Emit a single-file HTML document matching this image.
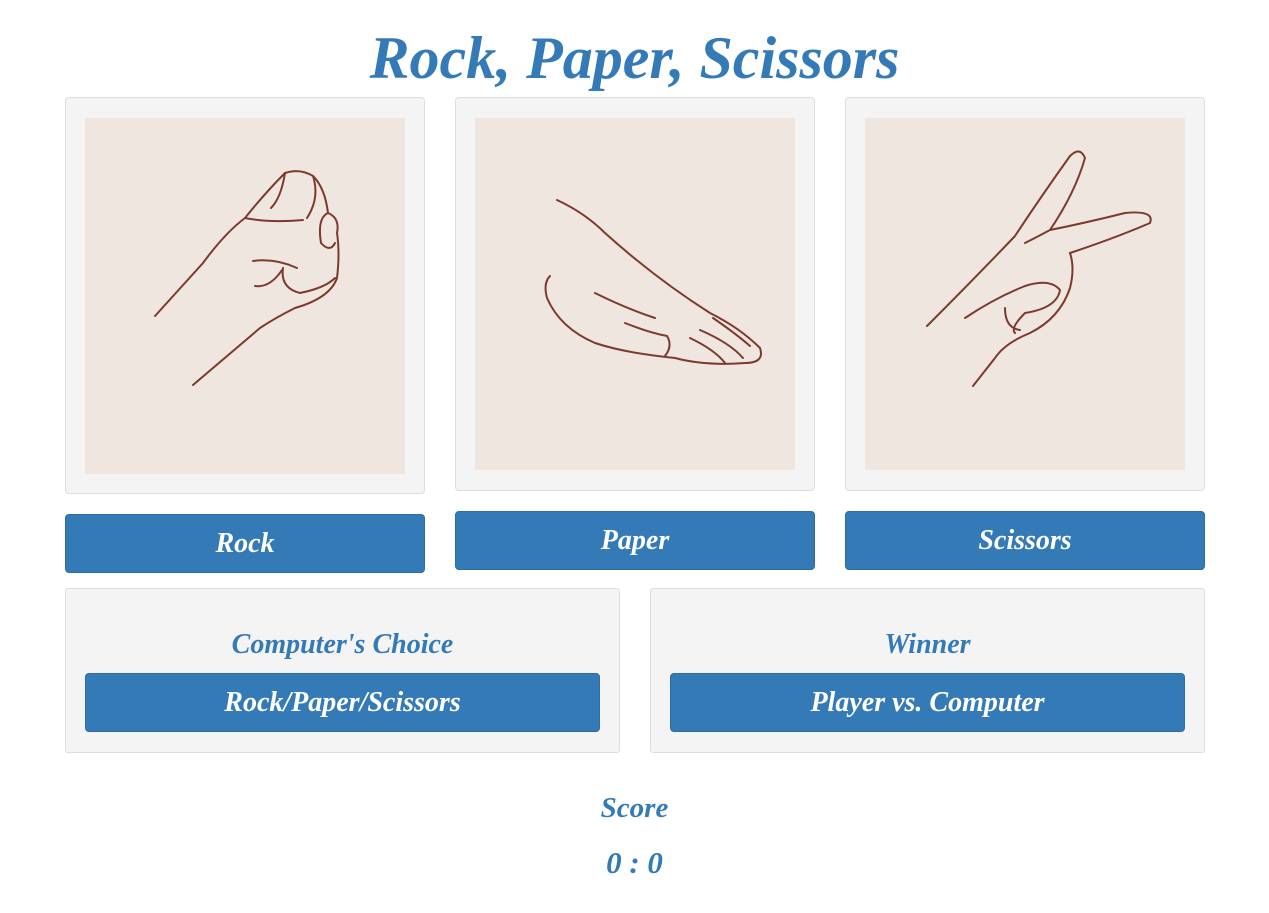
<!DOCTYPE html>
<html><head><meta charset="utf-8">
<style>
*{box-sizing:border-box;margin:0;padding:0}
body{width:1269px;height:913px;background:#fff;position:relative;font-family:"Liberation Serif",serif;font-style:italic;font-weight:bold;overflow:hidden}
.t{position:absolute;left:0;width:1269px;text-align:center;color:#337ab7}
.card{position:absolute;background:#f4f4f4;border:1px solid #ddd;border-radius:4px}
.img{position:absolute;background:#efe6df}
.btn{position:absolute;background:#337ab7;border:1px solid #2e6da4;border-radius:4px;color:#fff;text-align:center;font-size:28px}
.panel{position:absolute;background:#f4f4f4;border:1px solid #ddd;border-radius:3px}
.h{position:absolute;width:100%;text-align:center;color:#337ab7;font-size:28px}
svg{position:absolute;left:0;top:0}
path{fill:none;stroke:#7d3a2c;stroke-width:2;stroke-linecap:round}
</style></head><body>
<div class="t" style="top:20px;font-size:60px;line-height:76px">Rock, Paper, Scissors</div>

<div class="card" style="left:65px;top:97px;width:360px;height:397px"></div>
<div class="img" style="left:85px;top:118px;width:320px;height:356px">
<svg width="320" height="356"><path d="M70 198 L118 145 Q140 115 160 100 Q180 75 200 55 Q215 50 228 58 Q240 70 243 95 Q255 100 252 115 Q255 135 252 160 Q245 180 210 190 Q190 200 175 210 L108 267"/><path d="M160 100 Q185 105 218 102 M200 55 Q196 80 186 90 M228 58 Q235 80 222 100 M243 95 Q232 100 236 125 Q245 135 250 125 M168 143 Q190 140 212 150 M198 150 Q195 170 215 175 Q240 170 250 160 M170 168 Q185 170 197 152"/></svg></div>
<div class="btn" style="left:65px;top:514px;width:360px;height:59px;line-height:58px">Rock</div>

<div class="card" style="left:455px;top:97px;width:360px;height:394px"></div>
<div class="img" style="left:475px;top:118px;width:320px;height:352px">
<svg width="320" height="352"><path d="M82 82 Q110 95 130 115 Q180 160 235 195 Q265 210 285 230 Q290 245 270 245 Q230 248 200 240 Q150 235 120 225 Q85 210 72 180 Q68 165 75 158 M120 175 Q150 190 180 200 M150 205 Q175 215 192 218 Q198 228 190 238 M238 200 Q260 215 275 228 M225 212 Q255 225 268 240 M215 220 Q240 232 250 245"/></svg></div>
<div class="btn" style="left:455px;top:511px;width:360px;height:59px;line-height:58px">Paper</div>

<div class="card" style="left:845px;top:97px;width:360px;height:394px"></div>
<div class="img" style="left:865px;top:118px;width:320px;height:352px">
<svg width="320" height="352"><path d="M62 208 Q110 160 150 118 Q175 80 205 38 Q215 28 220 40 Q210 75 185 112 Q220 105 260 95 Q290 92 285 105 Q250 120 205 135 Q210 150 205 170 Q195 200 165 215 Q140 225 130 240 L108 268 M185 112 Q170 120 160 125 M100 200 Q130 180 160 168 Q185 160 195 172 Q192 190 160 195 Q145 210 150 215 M140 190 Q140 210 155 212"/></svg></div>
<div class="btn" style="left:845px;top:511px;width:360px;height:59px;line-height:58px">Scissors</div>

<div class="panel" style="left:65px;top:588px;width:555px;height:165px">
<div class="h" style="top:40px">Computer's Choice</div>
<div class="btn" style="left:19px;top:84px;width:515px;height:59px;line-height:58px">Rock/Paper/Scissors</div></div>
<div class="panel" style="left:650px;top:588px;width:555px;height:165px">
<div class="h" style="top:40px">Winner</div>
<div class="btn" style="left:19px;top:84px;width:515px;height:59px;line-height:58px">Player vs. Computer</div></div>

<div class="t" style="top:792px;font-size:29px">Score</div>
<div class="t" style="top:845px;font-size:31px">0 : 0</div>
</body></html>
